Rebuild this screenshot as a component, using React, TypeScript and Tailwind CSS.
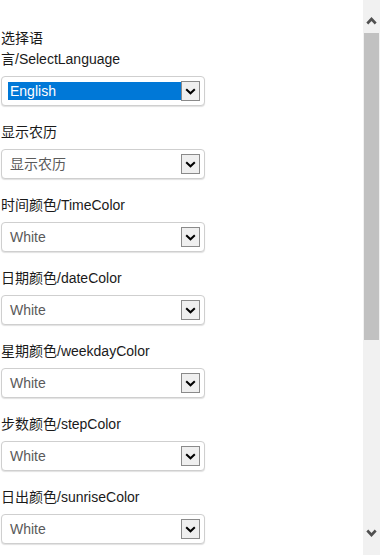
import React from "react";

const FONT = { fontFamily: '"Liberation Sans", Arial, "Noto Sans CJK SC", sans-serif' };

type Item = { label: React.ReactNode; value: string; selected?: boolean };

const items: Item[] = [
  { label: (<>选择语<br />言/SelectLanguage</>), value: "English", selected: true },
  { label: "显示农历", value: "显示农历" },
  { label: "时间颜色/TimeColor", value: "White" },
  { label: "日期颜色/dateColor", value: "White" },
  { label: "星期颜色/weekdayColor", value: "White" },
  { label: "步数颜色/stepColor", value: "White" },
  { label: "日出颜色/sunriseColor", value: "White" },
];

function Chevron() {
  return (
    <svg width="11" height="7" viewBox="0 0 11 7">
      <polyline points="1.2,1.2 5.5,5.3 9.8,1.2" fill="none" stroke="#000" strokeWidth="2" />
    </svg>
  );
}

function SelectBox({ value, selected }: { value: string; selected?: boolean }) {
  return (
    <div className="ml-[1px] flex h-[30px] w-[204px] items-center rounded-[4px] border border-[#cfcfcf] bg-white pl-[6px] pr-[4px] shadow-[0_1px_1px_rgba(0,0,0,0.12)]">
      {selected ? (
        <div className="flex h-[18px] flex-1 items-center bg-[#0078d7] pl-[2px] text-[14px] leading-[18px] text-white">
          {value}
        </div>
      ) : (
        <div className="flex h-[18px] flex-1 items-center pl-[2px] text-[14px] leading-[18px] text-[#5a5a5a]">
          {value}
        </div>
      )}
      <div className="flex h-[20px] w-[19px] items-center justify-center border border-[#8a8a8a] bg-[#efefef]">
        <Chevron />
      </div>
    </div>
  );
}

function ScrollArrow({ up }: { up?: boolean }) {
  return (
    <svg width="11" height="8" viewBox="0 0 11 8">
      <polyline
        points={up ? "1.3,6.5 5.5,2 9.7,6.5" : "1.3,1.5 5.5,6 9.7,1.5"}
        fill="none"
        stroke="#505050"
        strokeWidth="2.6"
      />
    </svg>
  );
}

export default function App() {
  return (
    <div className="flex h-[555px] w-[380px] overflow-hidden bg-white" style={FONT}>
      <div className="flex w-[363px] flex-col overflow-hidden pt-[28px]">
        {items.map((it, i) => (
          <div key={i} className="mb-[16px] flex flex-col">
            <div className="pl-[1px] text-[14px] leading-[21px] text-[#1a1a1a]">{it.label}</div>
            <div className="mt-[6px]">
              <SelectBox value={it.value} selected={it.selected} />
            </div>
          </div>
        ))}
      </div>
      <div className="flex w-[17px] flex-col bg-[#f1f1f1]">
        <div className="flex h-[33px] items-start justify-center pt-[17px]">
          <ScrollArrow up />
        </div>
        <div className="ml-[1px] h-[307px] w-[15px] bg-[#c1c1c1]" />
        <div className="flex-1" />
        <div className="flex h-[33px] items-end justify-center pb-[18px]">
          <ScrollArrow />
        </div>
      </div>
    </div>
  );
}
